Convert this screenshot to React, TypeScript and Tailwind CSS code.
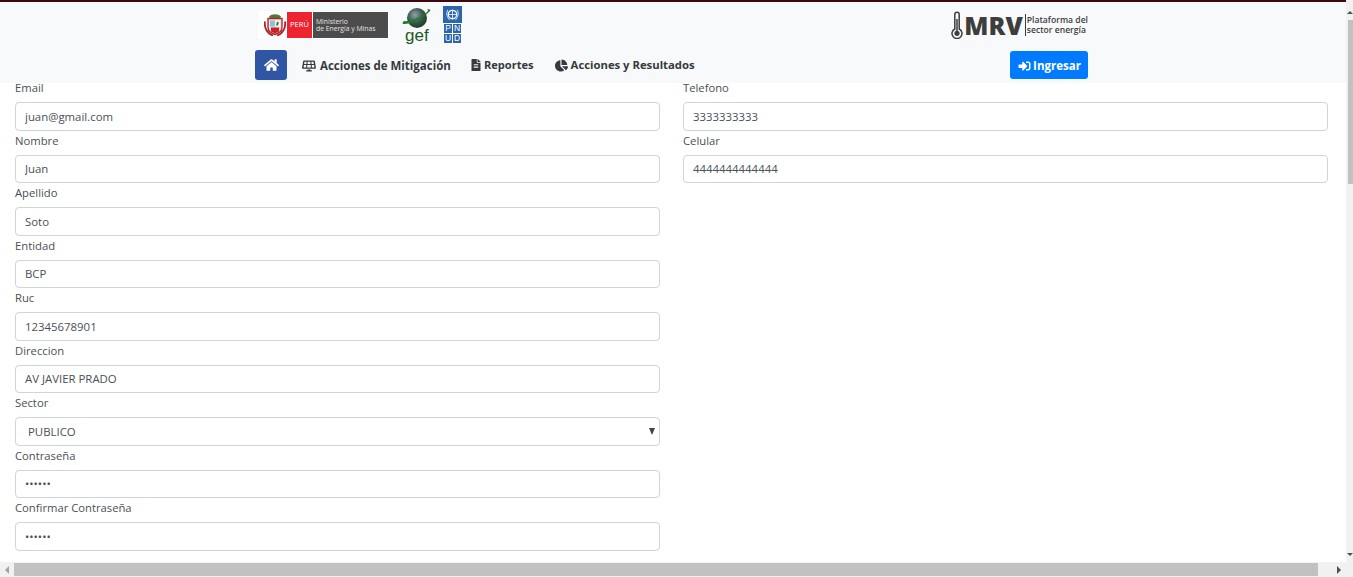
import { FaChartPie, FaFileAlt, FaHome, FaSignInAlt, FaSolarPanel } from 'react-icons/fa';

const leftFields = [
  { label: 'Email', value: 'juan@gmail.com' },
  { label: 'Nombre', value: 'Juan' },
  { label: 'Apellido', value: 'Soto' },
  { label: 'Entidad', value: 'BCP' },
  { label: 'Ruc', value: '12345678901' },
  { label: 'Direccion', value: 'AV JAVIER PRADO' },
  { label: 'Sector', value: 'PUBLICO', select: true },
  { label: 'Contraseña', value: '123456', password: true },
  { label: 'Confirmar Contraseña', value: '123456', password: true },
];

const rightFields = [
  { label: 'Telefono', value: '3333333333' },
  { label: 'Celular', value: '4444444444444' },
];

type FieldProps = { label: string; value: string; select?: boolean; password?: boolean };

function Field({ label, value, select, password }: FieldProps) {
  return (
    <div className="h-[52.5px]">
      <label className="block h-[24px] text-[11.25px] leading-[20px] text-[#4a4f54]">{label}</label>
      {select ? (
        <div className="relative">
          <select
            defaultValue={value}
            className="block h-[28.5px] w-full appearance-none rounded-[4px] border border-[#ced4da] bg-white pl-[12px] text-[11.4px] text-[#495057] outline-none"
          >
            <option>{value}</option>
          </select>
          <span className="absolute right-[5px] top-[11px] h-0 w-0 border-x-[3.5px] border-t-[7px] border-x-transparent border-t-[#444]" />
        </div>
      ) : (
        <input
          readOnly
          type={password ? 'password' : 'text'}
          value={value}
          className="block h-[28.5px] w-full rounded-[4px] border border-[#ced4da] bg-white px-[9px] text-[11.4px] text-[#495057] outline-none"
        />
      )}
    </div>
  );
}

function PeruLogo() {
  return (
    <div className="flex h-[28px] w-[131px] items-center bg-white">
      <svg viewBox="0 0 22 24" className="ml-[6px] h-[25px] w-[22px]">
        <path d="M5 3c3-3 9-3 12 0l-1 2H6z" fill="#4c7a3c" />
        <path d="M4 5h14v9c0 4-4 6-7 7-3-1-7-3-7-7z" fill="#e8e4dc" stroke="#b9242c" strokeWidth="1.4" />
        <path d="M6 7h5v6H6z" fill="#8fc0d8" />
        <path d="M11 7h5v6h-5z" fill="#f4f4f4" />
        <path d="M7 14h8v4l-4 2-4-2z" fill="#c8202c" />
        <path d="M13 8l2 1-1 3h-2z" fill="#3f7d3c" />
        <path d="M1 8c-1 6 2 12 8 14M21 8c1 6-2 12-8 14" fill="none" stroke="#b3202a" strokeWidth="1.8" />
      </svg>
      <div className="ml-[1px] flex h-[26px] w-[25px] items-center justify-center bg-[#ee2330] text-[7.5px] text-white">PERÚ</div>
      <div className="ml-[1px] flex h-[26px] w-[75px] flex-col justify-center bg-[#4c4c4c] pl-[3px] text-[6.8px] leading-[7.5px] text-[#e4e4e4]">
        <span>Ministerio</span>
        <span className="whitespace-nowrap">de Energía y Minas</span>
      </div>
    </div>
  );
}

function GefLogo() {
  return (
    <div className="relative h-[36px] w-[30px]">
      <svg viewBox="0 0 30 24" className="absolute left-0 top-0 h-[24px] w-[30px]">
        <defs>
          <radialGradient id="globe" cx="0.4" cy="0.35" r="0.75">
            <stop offset="0" stopColor="#8fa0ad" />
            <stop offset="0.5" stopColor="#3a5a4a" />
            <stop offset="1" stopColor="#16361f" />
          </radialGradient>
        </defs>
        <circle cx="15" cy="11" r="10" fill="url(#globe)" />
        <path d="M1 17c6 1 20-6 27-13 1-1 0-2-3-2 2 1 1 2-1 4C18 11 7 15 2 14c-1 1-2 2-1 3z" fill="#1e7a2e" />
      </svg>
      <span className="absolute bottom-0 left-[3px] font-['Liberation_Sans',sans-serif] text-[17px] leading-[15px] text-[#1c5a2c]">gef</span>
    </div>
  );
}

function PnudLogo() {
  return (
    <div className="flex h-[38px] w-[19px] flex-col bg-[#2b66ad]">
      <div className="flex h-[18px] items-center justify-center">
        <svg viewBox="0 0 16 16" className="h-[15px] w-[15px]">
          <circle cx="8" cy="8" r="4.5" fill="none" stroke="#fff" strokeWidth="1.4" />
          <path d="M3 3c-2 4-1 8 2 11M13 3c2 4 1 8-2 11M8 3v10M4 8h8" fill="none" stroke="#dfe9f4" strokeWidth="1" />
        </svg>
      </div>
      <div className="grid flex-1 grid-cols-2 gap-[1px] bg-white p-[1px] text-center font-['Liberation_Sans',sans-serif] text-[8.5px] leading-[9px] text-white">
        {['P', 'N', 'U', 'D'].map((l) => (
          <span key={l} className="bg-[#2b66ad]">
            {l}
          </span>
        ))}
      </div>
    </div>
  );
}

function MrvLogo() {
  return (
    <div className="flex h-[28px] items-center text-[#3d3d3d]">
      <svg viewBox="0 0 12 28" className="h-[28px] w-[12px]">
        <path d="M3.8 18V3.5a2.2 2.2 0 0 1 4.4 0V18a5 5 0 1 1-4.4 0z" fill="none" stroke="#3d3d3d" strokeWidth="1.5" />
        <circle cx="6" cy="22.3" r="2.6" fill="#3d3d3d" />
        <path d="M6 8v13" stroke="#3d3d3d" strokeWidth="1.5" />
      </svg>
      <span className="ml-[1px] text-[25px] font-extrabold leading-none">MRV</span>
      <div className="ml-[2px] h-[22px] w-px bg-[#3d3d3d]" />
      <div className="ml-[1px] whitespace-nowrap text-[8.6px] font-semibold leading-[10.5px]">
        <div>Plataforma del</div>
        <div>sector energía</div>
      </div>
    </div>
  );
}

function NavLink({ icon, children, className }: { icon: React.ReactNode; children: React.ReactNode; className: string }) {
  return (
    <a className={`flex items-center whitespace-nowrap pt-[1px] font-bold text-[#343a40] ${className}`}>
      {icon}
      {children}
    </a>
  );
}

function Arrow({ dir }: { dir: 'left' | 'right' | 'up' | 'down' }) {
  if (dir === 'left') return <span className="h-0 w-0 border-y-[4px] border-r-[4px] border-y-transparent border-r-[#a3a3a3]" />;
  if (dir === 'right') return <span className="h-0 w-0 border-y-[4px] border-l-[4px] border-y-transparent border-l-[#505050]" />;
  if (dir === 'up') return <span className="h-0 w-0 border-x-[3px] border-b-[3px] border-x-transparent border-b-[#505050]" />;
  return <span className="h-0 w-0 border-x-[3px] border-t-[3px] border-x-transparent border-t-[#505050]" />;
}

export default function App() {
  return (
    <div className="flex h-[577px] w-[1353px] flex-col overflow-hidden bg-white font-['Open_Sans',sans-serif]">
      <div className="flex min-h-0 flex-1">
        <div className="min-w-0 flex-1">
          <div className="relative z-10 h-[83px] border-t-[2px] border-[#3a0a10] bg-[#f8f9fa]">
            <div className="ml-[255px] w-[833px]">
              <div className="flex h-[46px] items-center justify-between">
                <div className="flex items-center">
                  <div className="ml-[3px]">
                    <PeruLogo />
                  </div>
                  <div className="ml-[13px]">
                    <GefLogo />
                  </div>
                  <div className="ml-[11px] mb-[1px]">
                    <PnudLogo />
                  </div>
                </div>
                <MrvLogo />
              </div>
              <div className="mt-[2px] flex items-center">
                <div className="flex h-[30px] w-[32px] items-center justify-center rounded-[3px] bg-[#2f55a4] text-white">
                  <FaHome className="h-[14px] w-[15px]" />
                </div>
                <NavLink icon={<FaSolarPanel className="h-[12px] w-[14px]" />} className="ml-[15px] gap-[4px] text-[11.5px]">
                  Acciones de Mitigación
                </NavLink>
                <NavLink icon={<FaFileAlt className="h-[12px] w-[10px]" />} className="ml-[20px] gap-[3px] text-[11.1px]">
                  Reportes
                </NavLink>
                <NavLink icon={<FaChartPie className="h-[13px] w-[13px]" />} className="ml-[21px] gap-[3px] text-[11.3px]">
                  Acciones y Resultados
                </NavLink>
                <button className="ml-auto flex h-[28px] w-[78px] items-center justify-center gap-[2px] rounded-[3px] bg-[#007bff] pl-[1px] pt-[1px] text-[11.5px] font-bold text-white">
                  <FaSignInAlt className="h-[12px] w-[13px]" />
                  Ingresar
                </button>
              </div>
            </div>
          </div>
          <div className="relative z-20 mt-[-5px] grid grid-cols-[645px_645px] gap-x-[23px] pl-[15px]">
            <div>
              {leftFields.map((f) => (
                <Field key={f.label} {...f} />
              ))}
            </div>
            <div>
              {rightFields.map((f) => (
                <Field key={f.label} {...f} />
              ))}
            </div>
          </div>
        </div>
        {/* vertical scrollbar */}
        <div className="flex w-[7px] flex-col items-center bg-[#f1f1f1]">
          <div className="flex h-[20px] items-end justify-center pb-[6px]">
            <Arrow dir="up" />
          </div>
          <div className="ml-[2px] h-[164px] w-[5px] bg-[#c1c1c1]" />
          <div className="mt-auto flex h-[15px] items-center justify-center">
            <Arrow dir="down" />
          </div>
        </div>
      </div>
      {/* horizontal scrollbar */}
      <div className="flex h-[15px] items-center bg-[#f1f1f1]">
        <div className="flex w-[14px] items-center justify-center">
          <Arrow dir="left" />
        </div>
        <div className="h-[13px] w-[1304px] bg-[#c1c1c1]" />
        <div className="flex flex-1 items-center justify-start pl-[19px]">
          <Arrow dir="right" />
        </div>
      </div>
    </div>
  );
}
